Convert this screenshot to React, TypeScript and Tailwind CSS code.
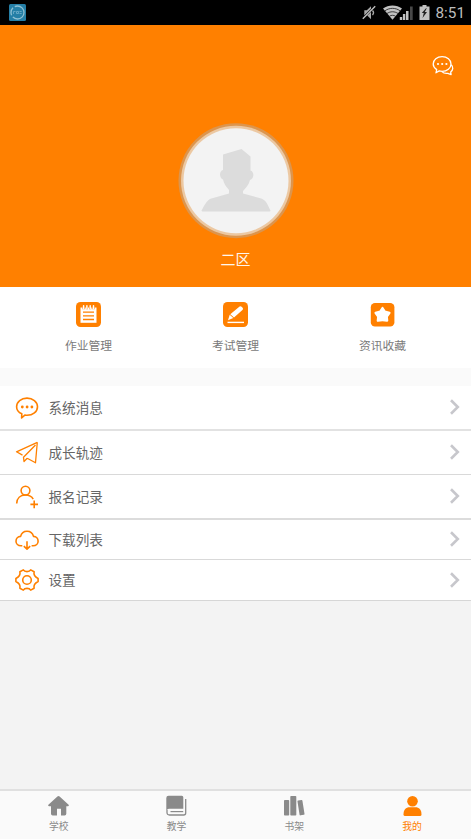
import type { ReactNode } from "react";
import clsx from "clsx";

const ORANGE = "#ff8000";

function StatusBar() {
  return (
    <div className="flex h-[25px] shrink-0 items-center bg-black pl-[9px] pr-[6px]">
      <svg width="17" height="17" viewBox="0 0 17 17">
        <rect width="17" height="17" rx="1.5" fill="#257fa6" />
        <circle cx="8.5" cy="8.5" r="6.5" fill="none" stroke="#8fc0d3" strokeWidth="1.3" strokeDasharray="15 2 8 2" />
        <path d="M4.5 10V7.5h2M7.5 7.5h2v2h-2zM10.5 7.5h2.2M10.5 9.5h2.2" fill="none" stroke="#73b1cb" strokeWidth=".8" />
      </svg>
      <svg className="ml-auto" width="70" height="17" viewBox="0 0 70 17" fill="#c2c2c2">
        {/* muted */}
        <path d="M2.3 6.3h2.5L9 2.3v13L5.3 11.500h-3z" fill="#a8a8a8" />
        <path d="M1 14.3 12.8 2.6" stroke="#000" strokeWidth="2.2" />
        <path d="M.8 14.8 13.2 2.3" stroke="#c2c2c2" strokeWidth="1.3" />
        <path d="M10.5 6.5c1.2 1.3 1.2 3.3 0 4.6" fill="none" stroke="#a8a8a8" strokeWidth="1.3" />
        {/* wifi */}
        <path d="M30.5 15.8 21 4.6C26.500.4 34.500.4 40 4.6z" />
        <path d="M22.8 6.900c4.600-3.400 10.800-3.400 15.400 0M25 9.500c3.300-2.300 7.700-2.300 11 0M27.500 12.200c1.800-1.200 4.200-1.200 6 0" fill="none" stroke="#000" strokeWidth=".7" />
        {/* signal */}
        <path d="M37.8 13h2.400v3h-2.400zM40.900 10h2.400v6h-2.400zM44 7h2.500v9H44z" />
        <path d="M48 2.5h2.700V16H48z" fill="#484848" />
        {/* battery */}
        <path d="M57.5 2.5h3V1h4v1.500h3V16h-10z" />
        <path d="m64 4.300-4.200 4.800h2l-1.300 5 4.500-6h-2.200l2-3.800z" fill="#222" />
      </svg>
      <span className="ml-[4px] pt-px font-[Roboto,sans-serif] text-[15.3px] leading-[24px] text-[#bdbdbd]">8:51</span>
    </div>
  );
}

function Profile() {
  return (
    <div className="flex h-[262px] shrink-0 flex-col items-center bg-[#ff8000]">
      <div className="flex h-[98px] w-full justify-end pt-[30px] pr-[17px]">
        <svg width="22" height="22" viewBox="0 0 22 22" fill="none" stroke="#fff" strokeWidth="1.3" strokeLinejoin="round">
          <path d="M4.700 14.600C2.700 13.200 1.200 11.300 1.200 9c0-4.300 3.900-7.400 8.900-7.400S19 4.700 19 9s-4 7.300-8.900 7.300c-1 0-2-.1-2.900-.4L4 17.800z" />
          <path d="M19.200 9.800c2.400 2.500 1.900 5.200-.5 7.200l.4 2.600-3.300-1.300c-2.300.3-4.500-.3-5.900-1.700" />
          <g fill="#fff" stroke="none">
            <circle cx="6" cy="9" r="1.1" />
            <circle cx="10.2" cy="9" r="1.1" />
            <circle cx="14.4" cy="9" r="1.1" />
          </g>
        </svg>
      </div>
      <svg width="116" height="116" viewBox="0 0 116 116">
        <circle cx="58" cy="57.7" r="57.5" fill="#dc954e" />
        <circle cx="58" cy="57.7" r="55" fill="#ecc8a2" />
        <circle cx="58" cy="57.7" r="52.5" fill="#f3f3f3" />
        <path
          d="M45 31.500 63.500 26l9 7.500v14c3.800 1 4 8-.5 9.500-1 4.500-4 7.500-7 11v2.500l19 5.200c4.500 2 6 7 8.500 11.800q0 1-1 1H24.500q-1 0-1-1c3-5 5-10 9-11.800L51 70.500V67c-3-3.500-5-6-6-10.500-4-2-4-8.500 0-9.500z"
          fill="#dcdcdc"
        />
      </svg>
      <div className="mt-[9px] text-[15px] leading-[22px] text-[#fff6ec]">二区</div>
    </div>
  );
}

function ToolIcon({ children }: { children: ReactNode }) {
  return (
    <svg width="25" height="25" viewBox="0 0 25 25">
      <rect width="25" height="25" rx="4.5" fill={ORANGE} />
      {children}
    </svg>
  );
}

const tools = [
  {
    label: "作业管理",
    icon: (
      <ToolIcon>
        <path d="M4.500 5.500h16v15.300h-16z" fill="#fff" />
        <path d="M7 10.200h11M7 13.800h11M7 17.500h11" stroke={ORANGE} strokeWidth="1.3" />
        <path d="M7.600 4v3.300M10.900 4v3.300M14.200 4v3.300M17.500 4v3.300" stroke={ORANGE} strokeWidth="2.2" />
        <path d="M7.600 3.700v3M10.900 3.700v3M14.200 3.700v3M17.500 3.700v3" stroke="#fff" strokeWidth="1.5" strokeLinecap="round" />
      </ToolIcon>
    ),
  },
  {
    label: "考试管理",
    icon: (
      <ToolIcon>
        <path d="m5 18.300 1.700-5.600 3.600 3.400zM7.300 12.200 16.600 4.500q1-.6 2 .2l1 1q.8.900.1 2L11 15.600z" fill="#fff" />
        <path d="M4.500 20.400H21" stroke="#fff" strokeWidth="1.4" />
      </ToolIcon>
    ),
  },
  {
    label: "资讯收藏",
    icon: (
      <svg width="25" height="25" viewBox="0 0 25 25">
        <rect x=".8" y="1" width="23.6" height="23.6" rx="4.2" fill={ORANGE} />
        <path
          d="m12.500 6 2.300 3.600 4.700 1.200-2.700 3.900.4 4q-4.700-1.200-9.400 0l.4-4-2.700-3.900 4.700-1.200z"
          fill="#fff"
          stroke="#fff"
          strokeWidth="2.2"
          strokeLinejoin="round"
        />
      </svg>
    ),
  },
];

const rows = [
  {
    label: "系统消息",
    height: "h-[45px] border-b-2 border-[#e2e2e2]",
    icon: (
      <>
        <path d="M6.800 17.800C3.600 16.500 1.600 13.900 1.600 10.800c0-5.100 4.700-8.700 10.400-8.700s10.500 3.600 10.500 8.700-4.700 8.500-10.500 8.500c-.9 0-1.500-.1-2.200-.2l-3.200 2.900z" />
        <g fill={ORANGE} stroke="none">
          <circle cx="7.3" cy="11" r="1.4" />
          <circle cx="12.1" cy="11" r="1.4" />
          <circle cx="16.9" cy="11" r="1.4" />
        </g>
      </>
    ),
  },
  {
    label: "成长轨迹",
    height: "h-[44px] border-b border-[#d9d9d9]",
    icon: <path d="M22.300 1.300 1.500 10.800l6 3.300M22.300 1.300 20.500 21.800l-8.300-4.600M20.500 4 8.500 16.300l.5 4.200 3.200-3.300" strokeWidth="1.3" />,
  },
  {
    label: "报名记录",
    height: "h-[45px] border-b-2 border-[#dcdcdc]",
    icon: (
      <>
        <circle cx="10.5" cy="5.6" r="4.4" />
        <path d="M1.700 18.500c.1-5.300 3.700-8.500 8.800-8.500 3.600 0 6.300 1.500 7.700 4.100M19.200 15.600v7.600M15.400 19.400H23" />
      </>
    ),
  },
  {
    label: "下载列表",
    height: "h-[40px] border-b border-[#d9d9d9]",
    icon: (
      <path d="M7.300 17.800H6C3 17.800 1 15.900 1 13.200s2-4.700 4.600-4.800C6.400 5.200 8.800 3.200 12 3.200s5.700 2 6.500 5.200c2.700.1 4.600 2.200 4.600 4.800s-2 4.600-5 4.600h-1.500M12 13.300v7.800M8.800 18.200l3.200 3 3.200-3" />
    ),
  },
  {
    label: "设置",
    height: "h-[41px] border-b border-[#d6d6d6]",
    icon: (
      <>
        <path d="M8.300 1.900C9 3 10.200 3.600 12 3.600s3-.6 3.700-1.700l3.400 1.900c-.7 3.200.7 5 4 6.700v3c-3.300 1.700-4.700 3.500-4 6.700l-3.400 1.900c-.7-1.100-1.900-1.700-3.700-1.700s-3 .6-3.700 1.700l-3.400-1.900c.7-3.200-.7-5-4-6.700v-3c3.300-1.700 4.700-3.500 4-6.700z" />
        <circle cx="12" cy="12" r="4.3" />
      </>
    ),
  },
];

const tabs = [
  {
    label: "学校",
    icon: (
      <path d="M9.400 1.600q1.100-1 2.200 0l9 8.200q.7 1.200-.7 1.500h-1.600v7.500q0 1.700-1.700 1.700H13v-6.800H9v6.800H4.700Q3 20.500 3 18.800v-7.500H1.200q-1.500-.3-.8-1.500z" />
    ),
  },
  {
    label: "教学",
    icon: (
      <>
        <path d="M2.600.7h13.200q1.500 0 1.500 1.500v11.500H3.500Q1.300 13.700.3 15V3Q.3.700 2.600.7z" />
        <path d="M19.700 4v14q0 2-2 2H3.500Q1 20 1 17.500v-3" fill="none" stroke="#8a8a8a" strokeWidth="1.3" />
        <path d="M4.500 16h12.700v1.200H4.500z" />
      </>
    ),
  },
  {
    label: "书架",
    icon: (
      <>
        <rect x="0" y="5" width="5.2" height="15.5" rx=".8" />
        <rect x="6.3" y="1" width="6" height="19.5" rx=".8" />
        <rect x="14.5" y="5.2" width="5" height="15" rx=".8" transform="rotate(-9 17 12.7)" />
      </>
    ),
  },
  {
    label: "我的",
    active: true,
    icon: (
      <>
        <circle cx="10.5" cy="6.3" r="5.3" />
        <path d="M1.500 19.500c0-5 2.500-7.300 6-7.300h6c3.500 0 6 2.300 6 7.300q0 1.500-1.500 1.500H3q-1.500 0-1.500-1.500z" />
      </>
    ),
  },
];

export default function App() {
  return (
    <div className="flex h-[839px] w-[471px] flex-col overflow-hidden bg-[#f3f3f3] font-['Noto_Sans_CJK_SC',sans-serif]">
      <StatusBar />
      <Profile />

      <div className="flex h-[81px] shrink-0 bg-white px-[15px] pt-[15px]">
        {tools.map((tool) => (
          <div key={tool.label} className="flex flex-1 flex-col items-center">
            {tool.icon}
            <span className="mt-[9px] text-[11.8px] leading-[18px] text-[#7a7a7a]">{tool.label}</span>
          </div>
        ))}
      </div>

      <div className="h-[18px] shrink-0 bg-[#fafafa]" />

      <div className="shrink-0">
        {rows.map((row) => (
          <div key={row.label} className={clsx("flex items-center bg-white pl-[15px] pr-[11px]", row.height)}>
            <svg width="24" height="24" viewBox="0 0 24 24" fill="none" stroke={ORANGE} strokeWidth="1.6" strokeLinejoin="round">
              {row.icon}
            </svg>
            <span className="ml-[9.5px] pb-[2px] text-[13.6px] leading-5 text-[#666]">{row.label}</span>
            <svg className="mb-px ml-auto" width="10" height="16" viewBox="0 0 10 16" fill="none" stroke="#c7c7cc" strokeWidth="2.6">
              <path d="m1 1.300 6.800 6.700L1 14.700" />
            </svg>
          </div>
        ))}
      </div>

      <div className="mt-auto flex h-[50px] shrink-0 border-t-2 border-[#e0e0e0] bg-[#fafafa]">
        {tabs.map((tab) => (
          <div
            key={tab.label}
            className={clsx("flex flex-1 flex-col items-center pt-1", tab.active ? "text-[#ff8000]" : "text-[#8a8a8a]")}
          >
            <svg width="21" height="21" viewBox="0 0 21 21" fill="currentColor">
              {tab.icon}
            </svg>
            <span className="mt-[3px] text-[9.8px] leading-[14px]">{tab.label}</span>
          </div>
        ))}
      </div>
    </div>
  );
}
